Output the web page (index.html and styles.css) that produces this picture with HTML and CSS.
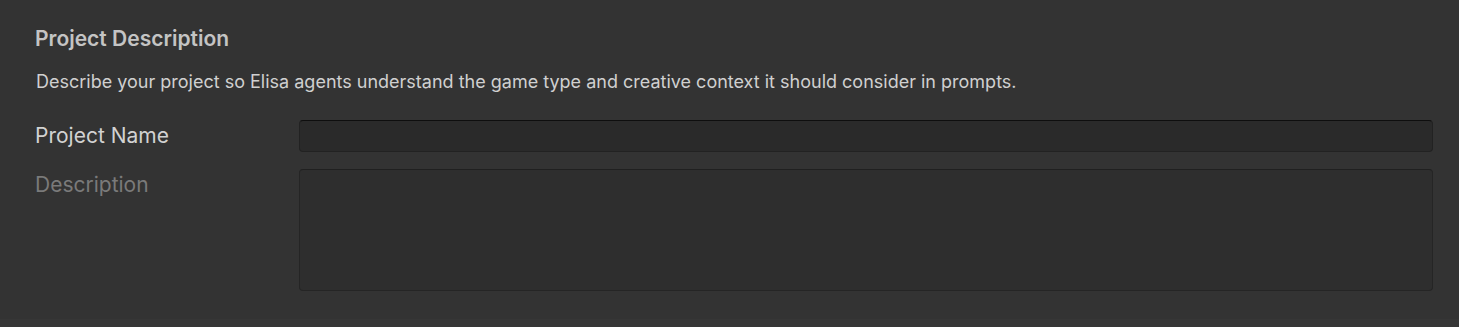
FILE: index.html
```html
<!DOCTYPE html>
<html lang="en">
<head>
  <meta charset="UTF-8">
  <title>Project Settings</title>
  <link rel="stylesheet" href="styles.css">
</head>
<body>
  <div class="panel">
    <h2 class="section-title">Project Description</h2>
    <p class="section-help">Describe your project so Elisa agents understand the game type and creative context it should consider in prompts.</p>

    <div class="field">
      <label class="field-label" for="projectName">Project Name</label>
      <input id="projectName" class="text-input" type="text">
    </div>

    <div class="field">
      <label class="field-label muted" for="projectDesc">Description</label>
      <textarea id="projectDesc" class="text-area"></textarea>
    </div>
  </div>
  <div class="footer-strip"></div>
</body>
</html>
```

FILE: styles.css
```css
* { box-sizing: border-box; margin: 0; padding: 0; }

body {
  font-family: Inter, 'Noto Sans', sans-serif;
  background: #333333;
  color: #d2d2d2;
  width: 1459px;
  height: 327px;
  overflow: hidden;
  display: flex;
  flex-direction: column;
}

.panel {
  padding: 27px 26px 0 35px;
  height: 319px;
}

.section-title {
  font-size: 21px;
  font-weight: 600;
  color: #c4c4c4;
  line-height: 24px;
}

.section-help {
  margin-top: 20px;
  margin-left: 1px;
  font-size: 18px;
  line-height: 22px;
  color: #d0d0d0;
}

.field {
  display: flex;
  align-items: flex-start;
  margin-top: 27px;
}

.field + .field {
  margin-top: 17px;
}

.field-label {
  width: 264px;
  flex-shrink: 0;
  font-size: 21px;
  line-height: 32px;
  color: #d2d2d2;
}

.field-label.muted {
  color: #7a7a7a;
}

.text-input,
.text-area {
  flex: 1;
  background: #2a2a2a;
  border: 1px solid #222222;
  border-top-color: #0e0e0e;
  border-radius: 4px;
  color: #d2d2d2;
  font: inherit;
  outline: none;
}

.text-input {
  height: 32px;
}

.text-area {
  height: 122px;
  resize: none;
  background: #2e2e2e;
  border-color: #252525;
  border-top-color: #202020;
}

.footer-strip {
  flex: 1;
  background: #363636;
}
```
